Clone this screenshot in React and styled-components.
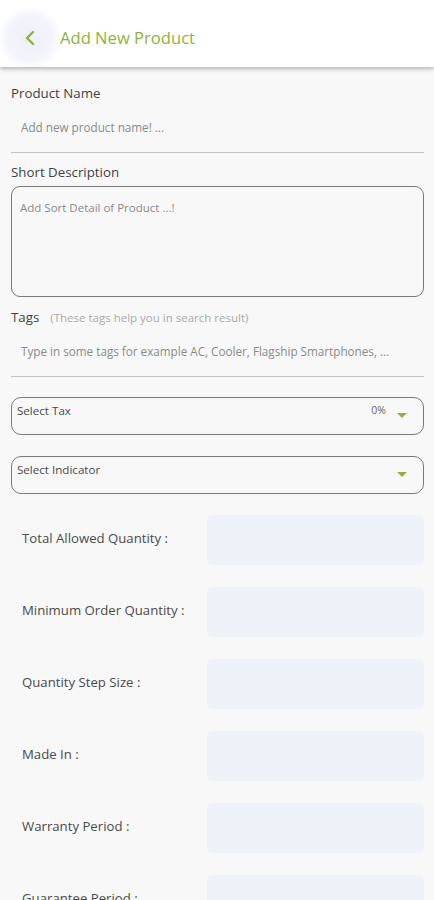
import React from "react";
import styled, { createGlobalStyle } from "styled-components";

const GlobalStyle = createGlobalStyle`
  body {
    margin: 0;
    background: #f8f8f8;
    font-family: "Open Sans", "Noto Sans", sans-serif;
  }
`;

const Page = styled.div`
  width: 434px;
  min-height: 900px;
  background: #f8f8f8;
  overflow: hidden;
`;

const Header = styled.header`
  height: 67px;
  box-sizing: border-box;
  padding-top: 8px;
  background: #fff;
  display: flex;
  align-items: center;
  box-shadow: 0 2px 4px rgba(0, 0, 0, 0.28);
  position: relative;
  z-index: 1;
`;

const BackButton = styled.div`
  width: 60px;
  height: 59px;
  display: flex;
  align-items: center;
  justify-content: center;
  background: radial-gradient(circle at 30px 30px, #eef0fa 0, #f3f4fb 22px, #fff 32px);
`;

const Title = styled.h1`
  margin: 0;
  font-size: 16.6px;
  font-weight: 400;
  color: #8fb33c;
`;

const Form = styled.div`
  padding: 0 10px 0 11px;
`;

const Label = styled.div`
  font-size: 13.3px;
  color: #3f3f3f;
  display: flex;
  align-items: baseline;
  gap: 11px;
  margin-top: ${(p) => p.$top}px;
`;

const Hint = styled.span`
  font-size: 11.5px;
  color: #aaa;
`;

const UnderlineField = styled.div`
  border-bottom: 1.5px solid #c4c4c4;
  padding: 0 10px;
  height: ${(p) => p.$height}px;
  display: flex;
  align-items: center;
  font-size: 11.7px;
  color: #8a8a8a;
  white-space: nowrap;
`;

const TextArea = styled.div`
  margin-top: 5px;
  height: 111px;
  box-sizing: border-box;
  border: 1.5px solid #7a7a7a;
  border-radius: 9px;
  padding: 13px 8px;
  font-size: 11.5px;
  color: #8a8a8a;
`;

const Select = styled.div`
  height: 38px;
  box-sizing: border-box;
  border: 1.5px solid #7a7a7a;
  border-radius: 10px;
  display: flex;
  padding: 5px 16px 0 5px;
  font-size: 11.6px;
  color: #4a4a4a;
  margin-top: ${(p) => p.$top}px;
`;

const SelectText = styled.span`
  flex: 1;
`;

const SelectValue = styled.span`
  color: #666;
  font-size: 10.5px;
  margin-right: 11px;
`;

const Caret = styled.span`
  width: 0;
  height: 0;
  margin-top: 10px;
  border-left: 5px solid transparent;
  border-right: 5px solid transparent;
  border-top: 5px solid #8fb33c;
`;

const Rows = styled.div`
  margin-top: 21px;
  display: flex;
  flex-direction: column;
  gap: 22px;
`;

const Row = styled.div`
  display: flex;
  align-items: center;
  padding-left: 11px;
`;

const RowLabel = styled.div`
  width: 185px;
  margin-top: -5px;
  font-size: 13.2px;
  color: #4a4a4a;
`;

const RowInput = styled.div`
  flex: 1;
  height: 50px;
  border-radius: 6px;
  background: #eef2f8;
`;

const rows = [
  "Total Allowed Quantity :",
  "Minimum Order Quantity :",
  "Quantity Step Size :",
  "Made In :",
  "Warranty Period :",
  "Guarantee Period :",
];

export default function App() {
  return (
    <Page>
      <GlobalStyle />
      <Header>
        <BackButton>
          <svg width="14" height="16" viewBox="0 0 14 16">
            <path d="M10 2 L4 8 L10 14" fill="none" stroke="#8fb33c" strokeWidth="2.4" strokeLinecap="round" strokeLinejoin="round" />
          </svg>
        </BackButton>
        <Title>Add New Product</Title>
      </Header>
      <Form>
        <Label $top={17}>Product Name</Label>
        <UnderlineField $height={50}>Add new product name! ...</UnderlineField>
        <Label $top={10}>Short Description</Label>
        <TextArea>Add Sort Detail of Product ...!</TextArea>
        <Label $top={11}>
          Tags <Hint>(These tags help you in search result)</Hint>
        </Label>
        <UnderlineField $height={50}>Type in some tags for example AC, Cooler, Flagship Smartphones, ...</UnderlineField>
        <Select $top={20}>
          <SelectText>Select Tax</SelectText>
          <SelectValue>0%</SelectValue>
          <Caret />
        </Select>
        <Select $top={21}>
          <SelectText>Select Indicator</SelectText>
          <Caret />
        </Select>
        <Rows>
          {rows.map((r) => (
            <Row key={r}>
              <RowLabel>{r}</RowLabel>
              <RowInput />
            </Row>
          ))}
        </Rows>
      </Form>
    </Page>
  );
}
